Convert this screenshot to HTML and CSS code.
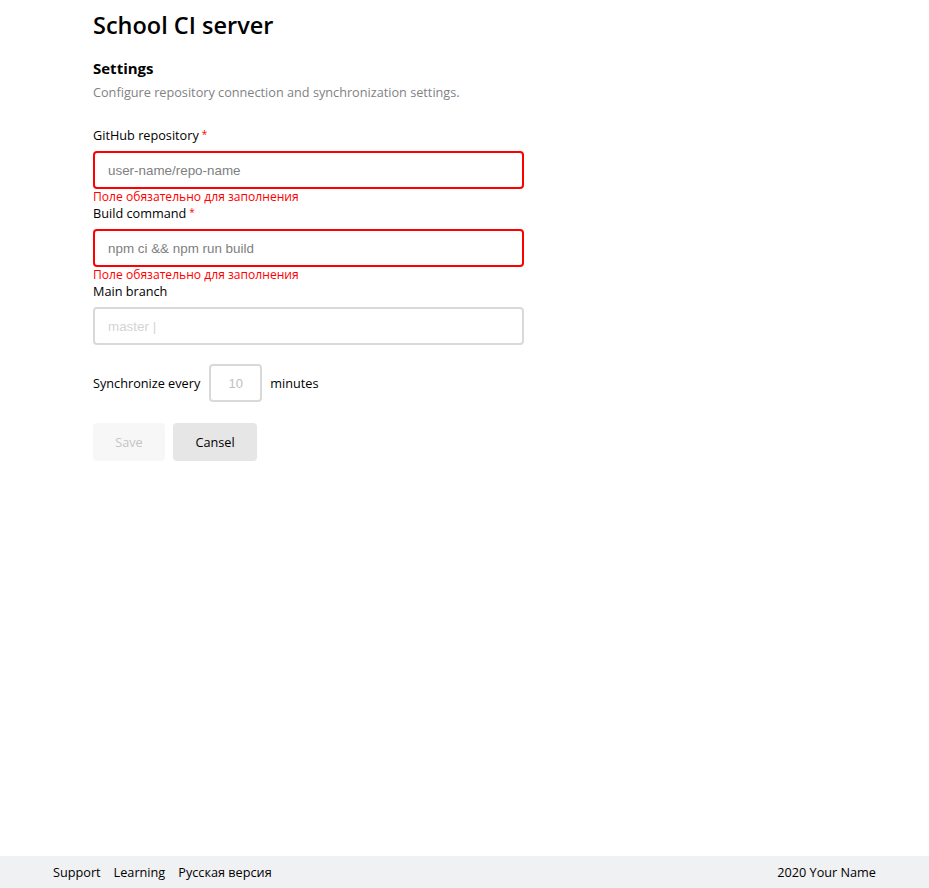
FILE: index.html
```html
<!DOCTYPE html>
<html lang="en">
<head>
<meta charset="utf-8">
<title>School CI server</title>
<link rel="stylesheet" href="styles.css">
</head>
<body>
<div class="page">
  <header class="header">
    <h1 class="title">School CI server</h1>
  </header>
  <main class="main">
    <h2 class="section-title">Settings</h2>
    <p class="section-desc">Configure repository connection and synchronization settings.</p>
    <form class="form">
      <div class="field">
        <label class="label">GitHub repository<span class="req">*</span></label>
        <input class="input input-error" type="text" placeholder="user-name/repo-name">
        <div class="error">Поле обязательно для заполнения</div>
      </div>
      <div class="field">
        <label class="label">Build command<span class="req">*</span></label>
        <input class="input input-error" type="text" placeholder="npm ci &amp;&amp; npm run build">
        <div class="error">Поле обязательно для заполнения</div>
      </div>
      <div class="field">
        <label class="label">Main branch</label>
        <input class="input input-plain" type="text" placeholder="master |">
      </div>
      <div class="sync">
        <span>Synchronize every</span>
        <input class="input-small" type="text" placeholder="10">
        <span>minutes</span>
      </div>
      <div class="buttons">
        <button type="button" class="btn btn-disabled">Save</button>
        <button type="button" class="btn btn-secondary">Cansel</button>
      </div>
    </form>
  </main>
  <footer class="footer">
    <nav class="footer-links">
      <a class="footer-link">Support</a>
      <a class="footer-link">Learning</a>
      <a class="footer-link">Русская версия</a>
    </nav>
    <div class="copyright">2020 Your Name</div>
  </footer>
</div>
</body>
</html>
```
FILE: styles.css
```css
* { box-sizing: border-box; }
html, body { margin: 0; padding: 0; height: 100%; }
body {
  font-family: "Open Sans", "Noto Sans", sans-serif;
  font-size: 12.7px;
  color: #000;
  background: #fff;
}
.page {
  min-height: 100%;
  display: flex;
  flex-direction: column;
}
.header { padding: 8px 93px 0; }
.title {
  margin: 0;
  font-size: 23.5px;
  font-weight: 550;
  line-height: 34px;
}
.main {
  flex: 1;
  padding: 16px 93px 0;
}
.section-title {
  margin: 0;
  font-size: 15px;
  font-weight: 700;
  line-height: 20px;
}
.section-desc {
  margin: 5px 0 0;
  line-height: 18px;
  color: #7f8285;
}
.form { margin-top: 26px; }
.field { display: flex; flex-direction: column; }
.label {
  display: block;
  height: 16px;
  line-height: 16px;
  margin-bottom: 8px;
}
.req {
  color: #ff0000;
  margin-left: 3px;
  font-size: 10px;
  line-height: 0;
  vertical-align: 2px;
}
.input, .input-small {
  font-family: "Liberation Sans", Arial, sans-serif;
  font-size: 13.4px;
  height: 38px;
  border-radius: 4px;
  outline: none;
  background: #fff;
}
.input {
  width: 431px;
  padding: 0 13px;
}
.input-error { border: 2px solid #ff0000; }
.input-error::placeholder { color: #808080; }
.input-plain { border: 2px solid #d9d9d9; }
.input-plain::placeholder { color: #d4d4d4; }
.error {
  height: 16px;
  font-size: 12.1px;
  line-height: 16px;
  color: #ff0000;
}
.sync {
  display: flex;
  align-items: center;
  margin-top: 19px;
}
.input-small {
  width: 53px;
  margin: 0 8px 0 9px;
  border: 2px solid #d9d9d9;
  text-align: center;
  padding: 0;
  font-size: 13px;
}
.input-small::placeholder { color: #c0c0c0; }
.buttons {
  display: flex;
  gap: 8px;
  margin-top: 21px;
}
.btn {
  height: 38px;
  border: 0;
  border-radius: 4px;
  font-family: "Open Sans", "Noto Sans", sans-serif;
  font-size: 12.7px;
  padding: 0;
}
.btn-disabled { background: #f7f7f7; color: #c4c4c4; width: 72px; }
.btn-secondary { background: #e6e6e6; color: #000; width: 84px; }
.footer {
  height: 32px;
  background: #f0f1f2;
  display: flex;
  align-items: center;
  justify-content: space-between;
  padding: 0 53px;
}
.footer-links { display: flex; gap: 13px; }
.footer-link { color: #000; text-decoration: none; }
```
